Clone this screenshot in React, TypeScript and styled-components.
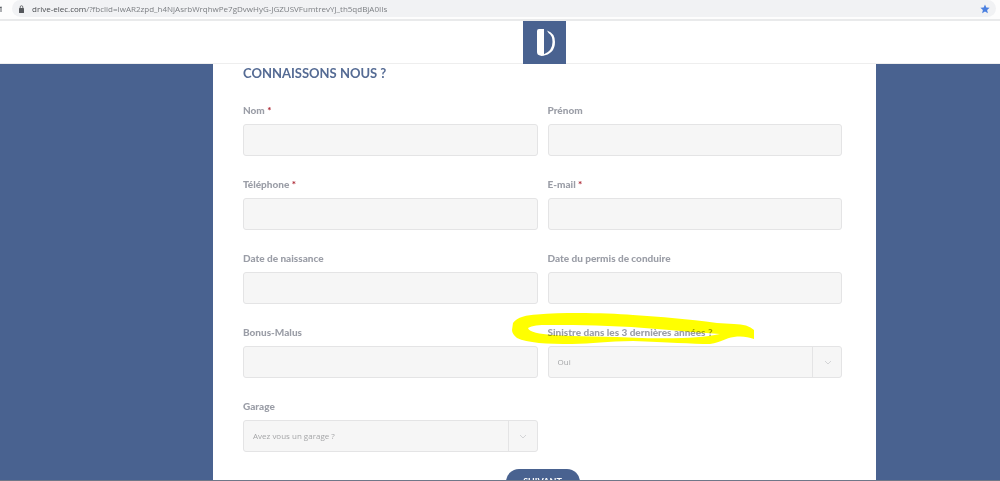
import React from "react";
import styled, { createGlobalStyle } from "styled-components";

const Global = createGlobalStyle`
  *, *::before, *::after { box-sizing: border-box; }
  body { margin: 0; background: #496290; font-family: Lato, "Open Sans", sans-serif; }
`;

const Screen = styled.div`
  height: 100vh;
  display: flex;
  flex-direction: column;
  overflow: hidden;
  border-bottom: 1px solid #6f7788;
`;

const BrowserBar = styled.div`
  flex: none;
  height: 21px;
  display: flex;
  align-items: center;
  gap: 8px;
  padding: 0 4px 2px 0;
  background: #fdfdfd;
  border-bottom: 2px solid #e9eaeb;
`;

const ReloadEdge = styled.svg`
  flex: none;
  width: 4px;
  height: 10px;
`;

const AddressBar = styled.div`
  flex: 1;
  height: 17px;
  display: flex;
  align-items: center;
  gap: 7px;
  padding: 0 6px;
  border-radius: 9px;
  background: #f1f2f4;
  color: #7c7f83;
  font: 8px/16px "Open Sans", sans-serif;
`;

const Url = styled.span`
  flex: 1;
  white-space: nowrap;
`;

const Domain = styled.span`
  color: #4b4e52;
`;

const Header = styled.header`
  flex: none;
  display: flex;
  justify-content: center;
  height: 43px;
  padding-left: 89px;
  background: #fff;
  border-bottom: 1px solid #eeeeee;
`;

const Main = styled.main`
  flex: 1;
  min-height: 0;
  display: flex;
  justify-content: center;
  padding-left: 89px;
`;

const Card = styled.form`
  width: 100%;
  max-width: 663px;
  height: max-content;
  padding: 0 34px 40px 30px;
  background: #fff;
`;

const Title = styled.h2`
  margin: 0;
  color: #556b94;
  font: 700 13px/18px Lato, sans-serif;
`;

const Fields = styled.div`
  display: grid;
  grid-template-columns: 1fr 1fr;
  gap: 20px 10px;
  padding-top: 20px;
`;

const Field = styled.div`
  position: relative;
  display: flex;
  flex-direction: column;
  gap: 6px;
`;

const Label = styled.label`
  color: #9b9ea7;
  font: 900 10px/16px Lato, sans-serif;
`;

const Required = styled.span`
  color: #b0303c;
`;

const Input = styled.input`
  width: 100%;
  height: 32px;
  padding: 0 9px;
  border: 1px solid #e4e4e5;
  border-radius: 3px;
  background: #f6f6f6;
`;

const SelectBox = styled.div`
  display: grid;
  grid-template-columns: 1fr 30px;
  height: 32px;
`;

const Select = styled.select`
  grid-area: 1 / 1 / 2 / 3;
  appearance: none;
  padding: 0 9px;
  border: 1px solid #e4e4e5;
  border-radius: 3px;
  background: #f6f6f6;
  color: #a5a6a8;
  font: 8px/16px "Open Sans", sans-serif;
`;

const Arrow = styled.span`
  grid-area: 1 / 2;
  z-index: 1;
  display: grid;
  place-items: center;
  border-left: 1px solid #e4e4e5;
  pointer-events: none;
`;

const Marker = styled.svg`
  position: absolute;
  left: -36px;
  top: -12px;
  width: 243px;
  height: 33px;
  mix-blend-mode: multiply;
  pointer-events: none;
`;

const Actions = styled.div`
  display: flex;
  justify-content: center;
  padding-top: 17px;
`;

const Submit = styled.button`
  width: 74px;
  height: 26px;
  border: 0;
  border-radius: 13px;
  background: #496290;
  color: #fff;
  font: 700 9px/16px Lato, sans-serif;
`;

type FieldData = {
  id: string;
  label: string;
  required?: boolean;
  option?: string;
  marked?: boolean;
};

const fields: FieldData[] = [
  { id: "nom", label: "Nom", required: true },
  { id: "prenom", label: "Prénom" },
  { id: "telephone", label: "Téléphone", required: true },
  { id: "email", label: "E-mail", required: true },
  { id: "naissance", label: "Date de naissance" },
  { id: "permis", label: "Date du permis de conduire" },
  { id: "bonus", label: "Bonus-Malus" },
  { id: "sinistre", label: "Sinistre dans les 3 dernières années ?", option: "Oui", marked: true },
  { id: "garage", label: "Garage", option: "Avez vous un garage ?" },
];

export default function App() {
  return (
    <Screen>
      <Global />
      <BrowserBar>
        <ReloadEdge viewBox="0 0 4 10" aria-hidden="true">
          <path d="M0 3.500h1.500M1 2.500V8" fill="none" stroke="#5f6368" />
        </ReloadEdge>
        <AddressBar>
          <svg width="7" height="8" viewBox="0 0 7 8" aria-hidden="true">
            <rect x="1" y="3" width="5" height="5" rx=".5" fill="#55585c" />
            <path d="M2.200 3V2a1.300 1.300 0 0 1 2.600 0v1" fill="none" stroke="#55585c" strokeWidth=".8" />
          </svg>
          <Url>
            <Domain>drive-elec.com</Domain>
            /?fbclid=IwAR2zpd_h4NjAsrbWrqhwPe7gDvwHyG-JGZUSVFumtrevYJ_th5qdBjA0IIs
          </Url>
          <svg width="10" height="10" viewBox="0 0 10 10" aria-label="Favori">
            <path d="M5 .5 6.300 3.500 9.600 3.800 7.100 6 7.900 9.200 5 7.500 2.100 9.200 2.900 6 .4 3.800 3.700 3.500Z" fill="#4a7fe0" />
          </svg>
        </AddressBar>
      </BrowserBar>
      <Header>
        <svg width="43" height="43" viewBox="0 0 43 43" role="img" aria-label="Drive Elec">
          <path d="M0 0h43v43H0z" fill="#496290" />
          <path d="M14 10Q14 8 16 8H21V34Q19 35.500 17 34.500Q14 34 14 31Z" fill="#fff" />
          <path d="M24 9.500Q32 12 32 21Q32 33 19 35L20.500 33.500Q29.500 30 29.500 21Q29.500 14.500 25.500 12Z" fill="#fff" />
        </svg>
      </Header>
      <Main>
        <Card>
          <Title>CONNAISSONS NOUS ?</Title>
          <Fields>
            {fields.map((f) => (
              <Field key={f.id}>
                <Label htmlFor={f.id}>
                  {f.label} {f.required && <Required>*</Required>}
                </Label>
                {f.option ? (
                  <SelectBox>
                    <Select id={f.id}>
                      <option>{f.option}</option>
                    </Select>
                    <Arrow>
                      <svg width="8" height="5" viewBox="0 0 8 5" aria-hidden="true">
                        <path d="m1 1 3 3 3-3" fill="none" stroke="#d3d4d6" />
                      </svg>
                    </Arrow>
                  </SelectBox>
                ) : (
                  <Input id={f.id} type="text" />
                )}
                {f.marked && (
                  <Marker viewBox="0 0 243 33" aria-hidden="true">
                    <path
                      fill="#ffff00"
                      fillRule="evenodd"
                      d="M1 11C5 5 15 3 25 2.500C55 0 95 1 121 3C150 5 175 7 205 11L222 12Q236 12 242 18V27C236 25 230 24 222 25C213 26 210 30 198 32C180 32 155 30 121 29C95 29 80 32 60 32C35 32 15 31 5 26Q0 22 0 18ZM16 16C22 12 35 13 50 13C80 13 110 14 145 17C170 19 190 21 208 22C190 26 165 27 130 26C95 24 65 25 40 23C28 22 17 20 16 16Z"
                    />
                  </Marker>
                )}
              </Field>
            ))}
          </Fields>
          <Actions>
            <Submit type="submit">SUIVANT</Submit>
          </Actions>
        </Card>
      </Main>
    </Screen>
  );
}
